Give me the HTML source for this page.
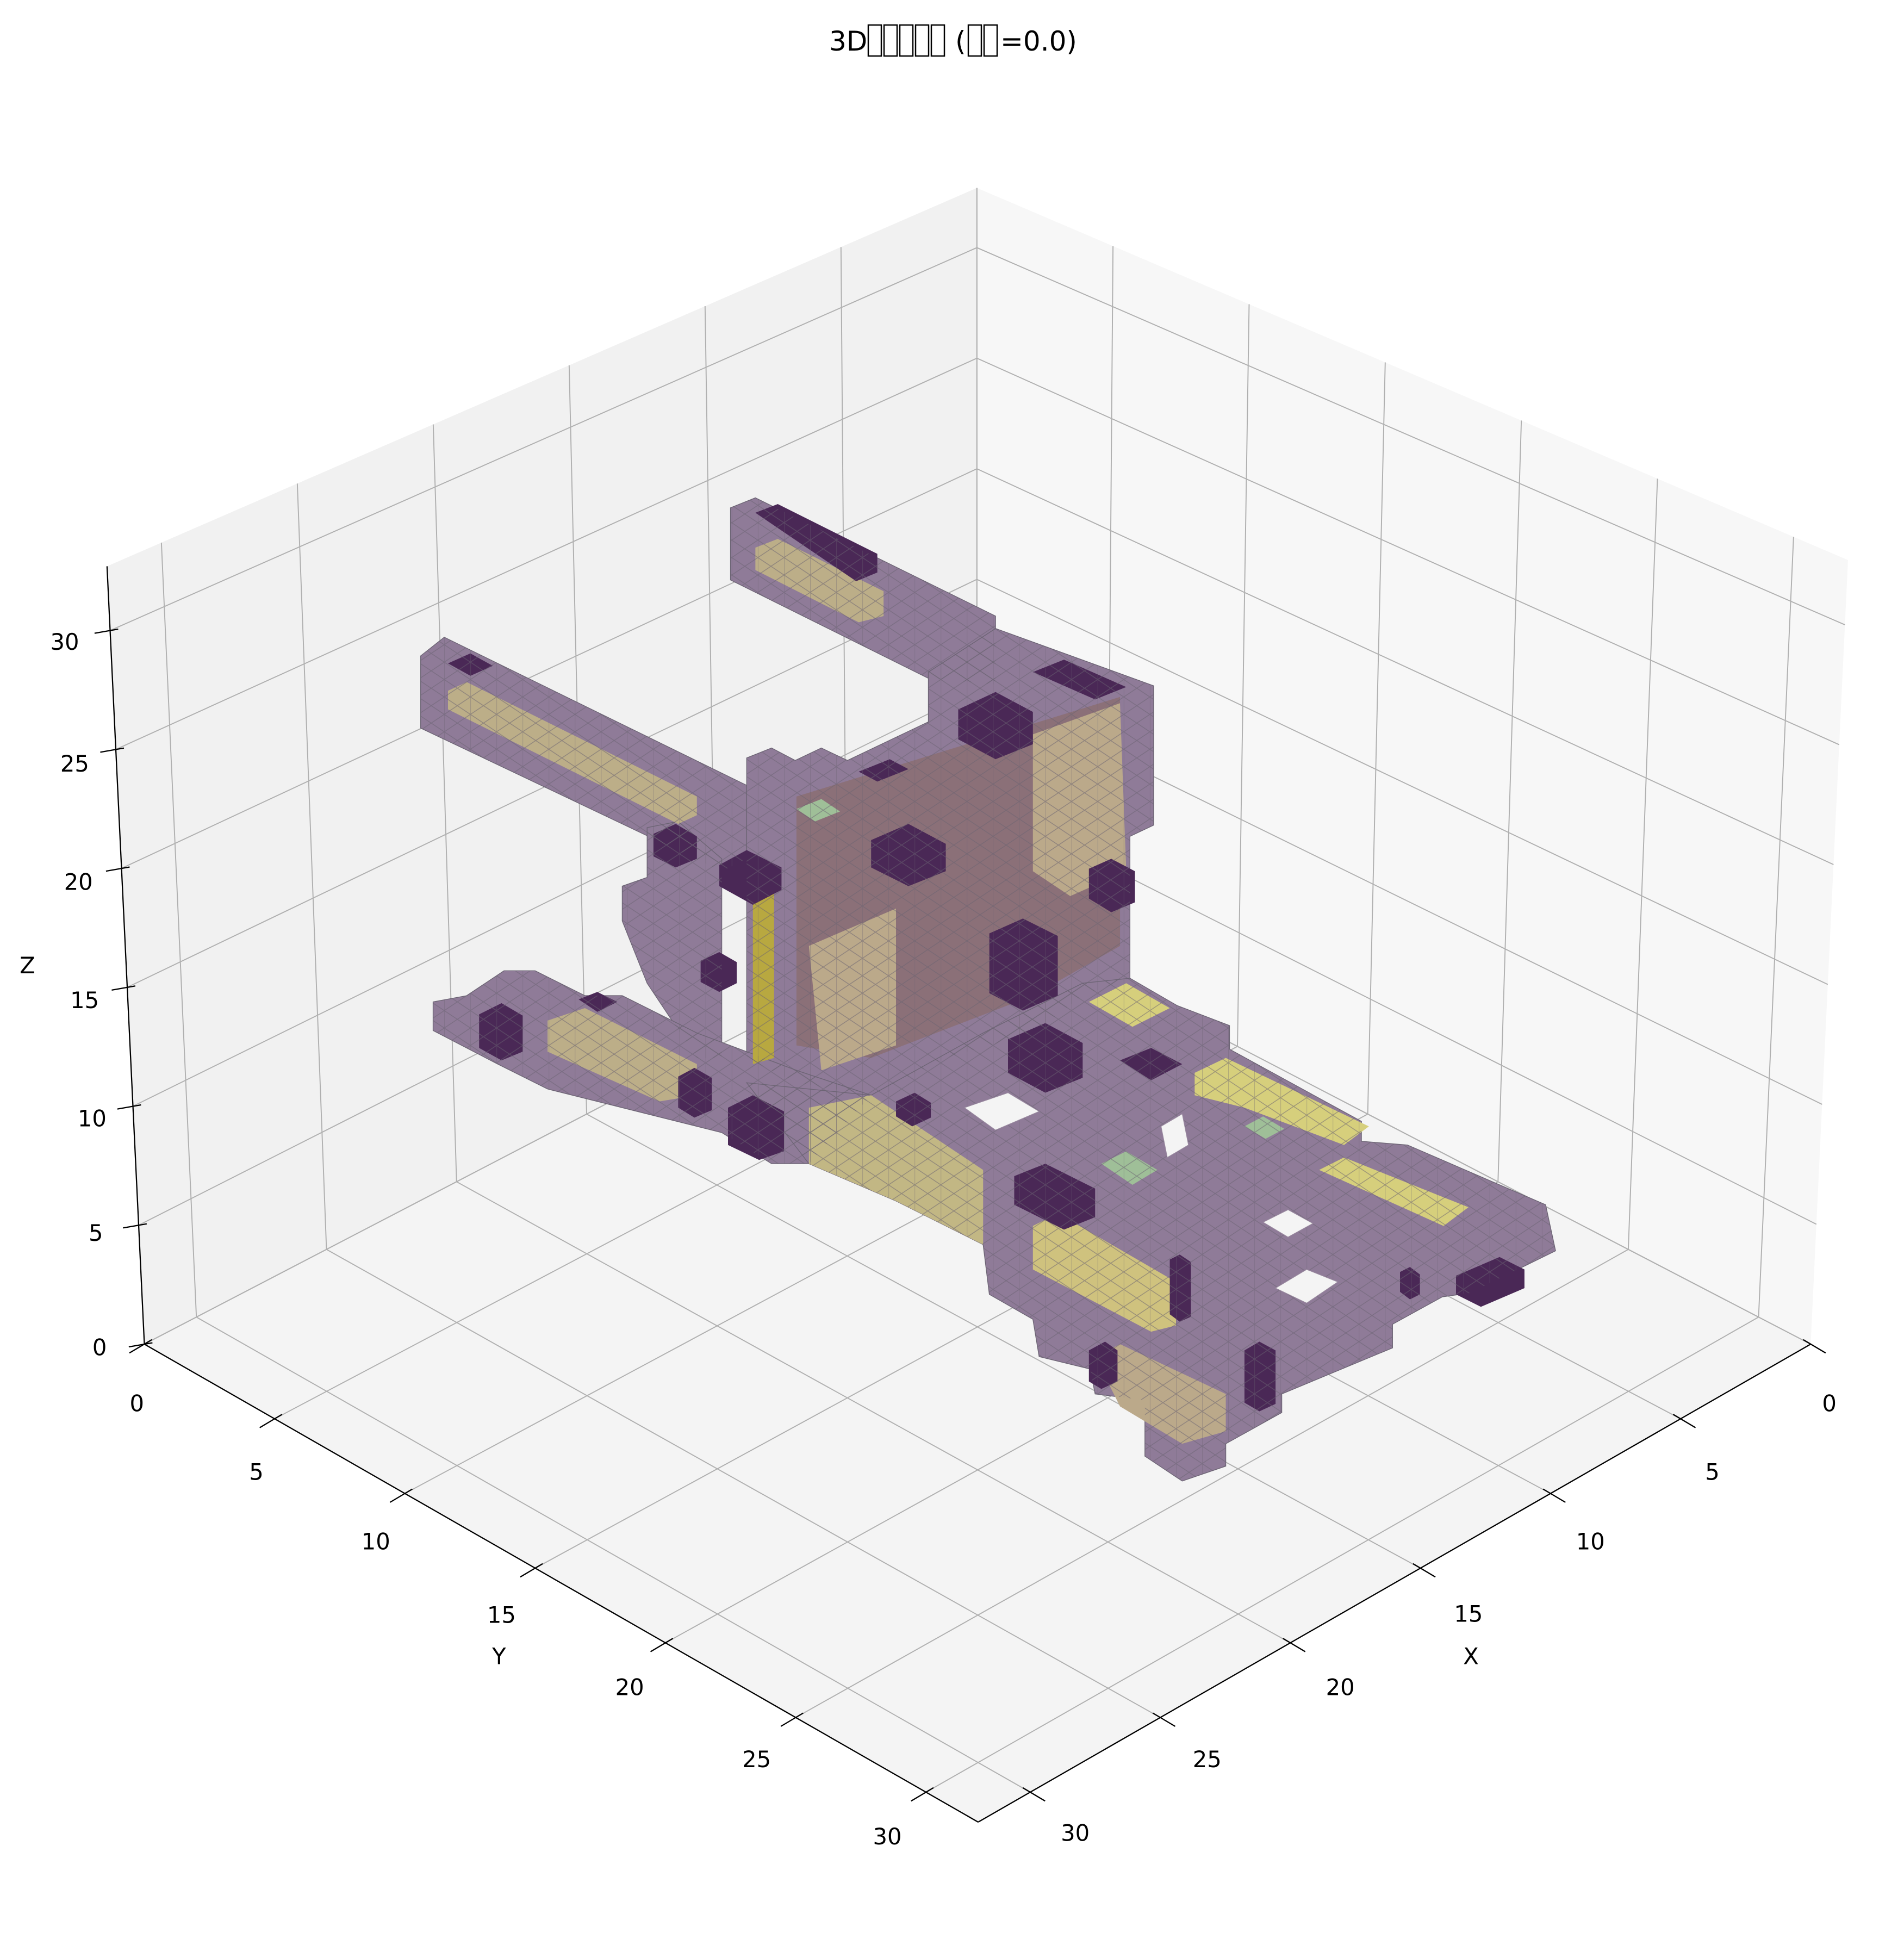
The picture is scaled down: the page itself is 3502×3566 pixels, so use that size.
<!DOCTYPE html>
<html><head><meta charset="utf-8"><style>
html,body{margin:0;padding:0;background:#fff;}
svg{display:block;}
text{font-family:"DejaVu Sans","Liberation Sans",sans-serif;fill:#000;}
</style></head><body>
<svg id="s" xmlns="http://www.w3.org/2000/svg" width="3502" height="3566" viewBox="0 0 3502 3566">
<defs>
<pattern id="hatch" width="21" height="28" patternUnits="userSpaceOnUse">
<path d="M0 0L21 14M0 14L21 28M0 14L21 0M0 28L21 14M0 0V28" stroke="#6a6270" stroke-width="0.6" fill="none" opacity="0.55"/>
</pattern>
</defs>
<rect width="3502" height="3566" fill="#fff"/>
<text x="1525" y="93" font-size="50">3D</text>
<g fill="none" stroke="#000" stroke-width="2.5">
<rect x="1597" y="46" width="24" height="57"/><rect x="1626" y="46" width="24" height="57"/><rect x="1655" y="46" width="24" height="57"/><rect x="1684" y="46" width="24" height="57"/><rect x="1713" y="46" width="24" height="57"/>
<rect x="1781" y="46" width="24" height="57"/><rect x="1810" y="46" width="24" height="57"/>
</g>
<text x="1757" y="93" font-size="50">(</text>
<text x="1840" y="93" font-size="50">=0.0)</text>
<g id="g" transform="scale(2.2889)">
<g id="panes"></g>
<g id="grid" stroke="#b0b0b0" stroke-width="0.85" fill="none"></g>
<g id="obj">
<g fill="#8f7b98" stroke="#6c6474" stroke-width="0.6">
<polygon id="p1" points="338,527 357,512 600,631 600,690 580,700 338,585"/>
<polygon id="p2" points="587,408 607,400 800,495 800,550 746,545 587,466"/>
<polygon id="p3" points="600,609 620,601 639,611 660,601 681,611 746,580 746,540 800,505 927,551 927,663 908,672 908,786 870,800 830,830 760,850 700,880 640,870 600,850 600,700"/>
<polygon id="p4" points="500,712 520,705 520,665 545,660 580,690 580,850 560,850 540,820 520,790 500,740"/>
<polygon id="p5" points="348,805 375,800 405,780 430,780 470,800 500,800 560,830 640,860 700,880 650,935 620,935 580,910 440,875 400,855 348,828"/>
<polygon id="p6" points="600,870 700,880 790,830 870,790 908,786 946,808 988,824 988,843 1094,901 1094,917 1131,920 1242,968 1250,1005 1181,1039 1159,1042 1119,1064 1119,1083 1030,1120 1030,1135 985,1160 985,1178 950,1190 920,1170 920,1125 880,1120 876,1100 835,1090 830,1060 795,1040 790,1000 720,965 650,935"/>
</g>
<g stroke="none">
<polygon fill="#8a6c6e" opacity="0.75" points="640,640 900,560 900,760 830,800 700,850 640,840"/>
<polygon fill="#bba98a" points="830,590 900,565 905,700 860,720 830,700"/>
<polygon fill="#bba98a" points="650,760 720,730 720,840 660,860"/>
<polygon fill="#bcae88" points="360,555 375,548 560,640 560,655 545,662 360,570"/>
<polygon fill="#bcae88" points="607,440 625,433 710,475 710,495 690,500 607,458"/>
<polygon fill="#b8a840" points="605,722 622,715 622,850 605,855"/>
<polygon fill="#c2b784" points="650,890 700,880 790,940 790,1000 720,965 650,935"/>
<polygon fill="#d6cf7c" points="875,805 905,790 940,810 910,825"/>
<polygon fill="#d6cf7c" points="960,862 985,850 1100,905 1080,920 1000,890 960,880"/>
<polygon fill="#d6cf7c" points="1060,940 1080,930 1180,970 1160,985"/>
<polygon fill="#cfc27e" points="830,985 850,975 945,1030 945,1065 925,1070 830,1020"/>
<polygon fill="#bba98a" points="880,1090 900,1080 985,1120 985,1150 950,1160 900,1130"/>
<polygon fill="#bcae88" points="440,820 470,810 560,855 560,880 530,885 440,845"/>
<polygon fill="#9fbf98" points="885,935 905,925 930,940 910,952"/>
<polygon fill="#9fbf98" points="1000,905 1015,897 1032,907 1017,915"/>
<polygon fill="#9fbf98" points="640,650 660,642 675,652 655,660"/>
<g fill="#4a2856">
<polygon points="360,533 378,525 396,535 378,543"/>
<polygon points="607,412 625,405 705,445 705,460 688,467"/>
<polygon points="578,695 600,683 628,697 628,715 605,727 578,712"/>
<polygon points="700,675 730,662 760,678 760,700 730,712 700,697"/>
<polygon points="770,570 800,556 830,572 830,598 800,610 770,594"/>
<polygon points="795,750 822,738 850,752 850,800 822,812 795,798"/>
<polygon points="875,698 893,690 912,700 912,725 893,733 875,722"/>
<polygon points="830,540 855,530 905,552 880,562"/>
<polygon points="525,670 543,662 560,672 560,690 543,697 525,688"/>
<polygon points="563,772 578,765 592,773 592,790 578,797 563,789"/>
<polygon points="385,815 403,806 420,816 420,845 403,852 385,842"/>
<polygon points="465,803 480,797 496,805 480,813"/>
<polygon points="545,865 558,858 572,866 572,892 558,898 545,890"/>
<polygon points="585,890 605,880 630,893 630,925 610,932 585,920"/>
<polygon points="815,945 840,935 880,955 880,978 855,988 815,968"/>
<polygon points="875,1085 888,1078 898,1085 898,1110 885,1116 875,1110"/>
<polygon points="1000,1085 1012,1078 1025,1085 1025,1128 1012,1134 1000,1127"/>
<polygon points="1170,1025 1205,1010 1225,1020 1225,1035 1190,1050 1170,1040"/>
<polygon points="720,885 735,878 748,886 748,898 733,905 720,897"/>
<polygon points="1125,1022 1133,1018 1141,1024 1141,1040 1133,1044 1125,1038"/>
<polygon points="940,1012 948,1008 957,1014 957,1058 948,1062 940,1056"/>
<polygon points="810,835 840,822 870,838 870,866 840,878 810,862"/>
<polygon points="900,852 925,842 950,855 925,868"/>
<polygon points="690,620 715,610 730,618 705,628"/>
</g>
</g>
<g fill="url(#hatch)" stroke="none">
<use href="#p1"/><use href="#p2"/><use href="#p3"/><use href="#p4"/><use href="#p5"/><use href="#p6"/>
</g>
<g fill="#f4f4f4" stroke="#9a8aa0" stroke-width="0.5">
<polygon points="775,890 810,878 835,893 800,908"/>
<polygon points="933,905 950,895 955,920 938,930"/>
<polygon points="1015,982 1035,972 1055,983 1035,994"/>
<polygon points="1025,1035 1050,1020 1075,1030 1050,1047"/>
</g>
</g>
<g id="axes" stroke="#000" stroke-width="1" fill="none"></g>
<g font-size="18.2" text-anchor="middle">
<text x="52" y="522">30</text><text x="60" y="620">25</text><text x="63" y="715">20</text><text x="68" y="810">15</text><text x="74" y="905">10</text><text x="77" y="997">5</text><text x="80" y="1089">0</text>
<text x="22" y="782">Z</text>
<text x="110" y="1134">0</text><text x="206" y="1189">5</text><text x="302" y="1245">10</text><text x="403" y="1304">15</text><text x="506" y="1362">20</text><text x="608" y="1420">25</text><text x="713" y="1482">30</text>
<text x="401" y="1337">Y</text>
<text x="1470" y="1134">0</text><text x="1376" y="1189">5</text><text x="1278" y="1245">10</text><text x="1180" y="1303">15</text><text x="1077" y="1362">20</text><text x="970" y="1420">25</text><text x="864" y="1479">30</text>
<text x="1182" y="1337">X</text>
</g>
</g>
</svg>
<script>
(function(){
var NS="http://www.w3.org/2000/svg";
var Bb=[785,732],Lb=[116,1080],Rb=[1455,1080],Fb=[786,1464];
var Bt=[785,151],Lt=[86,455],Rt=[1485,450],Ft=[786,784];
var ZM=32.7;
function bil(B,L,R,F,u,v){return [B[0]*(1-u)*(1-v)+L[0]*u*(1-v)+R[0]*(1-u)*v+F[0]*u*v,B[1]*(1-u)*(1-v)+L[1]*u*(1-v)+R[1]*(1-u)*v+F[1]*u*v];}
function P(x,y,z){var u=x/32,v=y/32,w=z/ZM;var b=bil(Bb,Lb,Rb,Fb,u,v),t=bil(Bt,Lt,Rt,Ft,u,v);return [b[0]+(t[0]-b[0])*w,b[1]+(t[1]-b[1])*w];}
function el(p,n,a){var e=document.createElementNS(NS,n);for(var k in a)e.setAttribute(k,a[k]);p.appendChild(e);return e;}
function line(p,a,b){el(p,"line",{x1:a[0],y1:a[1],x2:b[0],y2:b[1]});}
function poly(p,pts,fill){el(p,"polygon",{points:pts.map(function(q){return q[0]+","+q[1];}).join(" "),fill:fill});}
var panes=document.getElementById("panes"),grid=document.getElementById("grid"),axes=document.getElementById("axes");
poly(panes,[P(0,0,0),P(32,0,0),P(32,32,0),P(0,32,0)],"#f4f4f4");
poly(panes,[P(0,0,0),P(32,0,0),P(32,0,ZM),P(0,0,ZM)],"#f1f1f1");
poly(panes,[P(0,0,0),P(0,32,0),P(0,32,ZM),P(0,0,ZM)],"#f7f7f7");
for(var t=0;t<=30;t+=5){
 line(grid,P(t,0,0),P(t,32,0));
 line(grid,P(0,t,0),P(32,t,0));
 line(grid,P(t,0,0),P(t,0,ZM));
 line(grid,P(0,t,0),P(0,t,ZM));
 line(grid,P(0,0,t),P(32,0,t));
 line(grid,P(0,0,t),P(0,32,t));
}
line(axes,P(32,0,0),P(32,0,ZM));
line(axes,P(32,0,0),P(32,32,0));
line(axes,P(0,32,0),P(32,32,0));
for(var t=0;t<=30;t+=5){
 var a=P(32,t,0);line(axes,[a[0]+6,a[1]-3.6],[a[0]-12,a[1]+7.1]);
 var b=P(t,32,0);line(axes,[b[0]-6,b[1]-3.6],[b[0]+12,b[1]+7.1]);
 var c=P(32,0,t);line(axes,[c[0]+6.5,c[1]-1.1],[c[0]-12.5,c[1]+2.2]);
}
})();
</script>
</body></html>
